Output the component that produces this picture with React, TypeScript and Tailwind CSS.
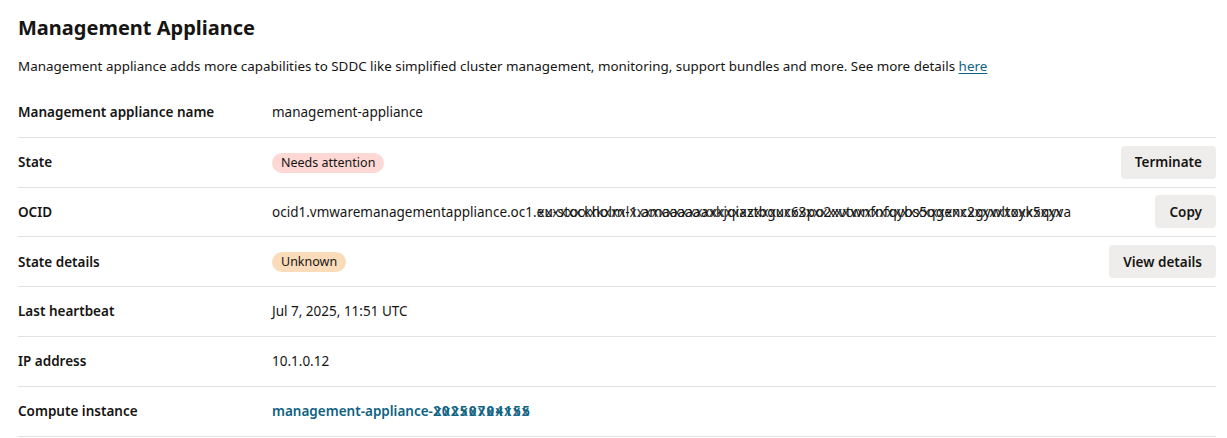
import React from 'react';

const font = { fontFamily: '"Noto Sans", "Open Sans", Arial, sans-serif' };

interface RowProps {
  label: string;
  children: React.ReactNode;
  action?: string;
}

const Row: React.FC<RowProps> = ({ label, children, action }) => (
  <div className="flex items-center min-h-[49.8px] border-b border-[#e4e2df]">
    <div className="w-[254px] shrink-0 text-[13.5px] font-semibold text-[#161513]">{label}</div>
    <div className="flex-1 min-w-0 text-[13.5px] text-[#161513]">{children}</div>
    {action && (
      <button
        type="button"
        className="h-[33px] px-[14px] rounded-[4px] bg-[#efedeb] text-[13.5px] font-semibold text-[#161513]"
      >
        {action}
      </button>
    )}
  </div>
);

// two strings drawn over each other, as in the redacted screenshot
const Scrambled: React.FC<{ under: string; over: string }> = ({ under, over }) => (
  <span className="relative inline-block whitespace-nowrap">
    <span>{under}</span>
    <span className="absolute left-[1px] top-0 opacity-90">{over}</span>
  </span>
);

export default function App() {
  return (
    <div className="bg-white w-[1227px] h-[438px] px-[18px] text-[#161513]" style={font}>
      <h1 className="pt-[15px] text-[20px] leading-[26px] font-bold">Management Appliance</h1>
      <p className="mt-[15px] text-[13.4px] leading-[20px]">
        Management appliance adds more capabilities to SDDC like simplified cluster management, monitoring, support
        bundles and more. See more details{' '}
        <a href="#" className="text-[#0e6282] underline underline-offset-2">
          here
        </a>
      </p>

      <div className="mt-[12px] w-[1198px]">
        <Row label="Management appliance name">management-appliance</Row>
        <Row label="State" action="Terminate">
          <span className="inline-block rounded-full bg-[#fdd8d4] px-[9px] py-[1px] text-[12.5px] leading-[18px]">
            Needs attention
          </span>
        </Row>
        <Row label="OCID" action="Copy">
          <span className="whitespace-nowrap">
            ocid1.vmwaremanagementappliance.oc1.
            <span className="tracking-[0.2px]">
              <Scrambled
                under="eu-stockholm-1.amaaaaaaxkjqiaztbguc63po2xvtwnfnfqybs5qgenc2gywltoyk5qyva"
                over="xxxxxxxxkxxxlxxxxxxxxxxxxxxxxxxxxxxxxxxxxxxxxxxxxxxxxxxxxxxxxxxxxxxxxxxx"
              />
            </span>
          </span>
        </Row>
        <Row label="State details" action="View details">
          <span className="inline-block rounded-full bg-[#fadcbb] px-[9px] py-[1px] text-[12.5px] leading-[18px]">
            Unknown
          </span>
        </Row>
        <Row label="Last heartbeat">Jul 7, 2025, 11:51 UTC</Row>
        <Row label="IP address">10.1.0.12</Row>
        <Row label="Compute instance">
          <a href="#" className="font-semibold text-[#0e6282] whitespace-nowrap">
            management-appliance-
            <span className="tracking-[1.2px]">
              <Scrambled under="20250704155" over="xxxxxxxxxxx" />
            </span>
          </a>
        </Row>
      </div>
    </div>
  );
}
